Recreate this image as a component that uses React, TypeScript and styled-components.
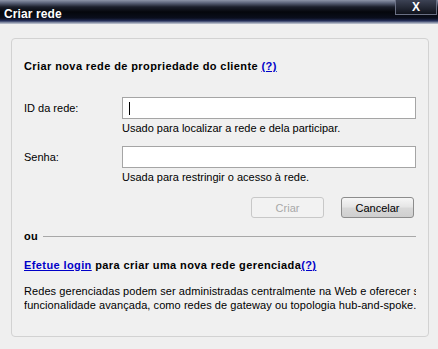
import React from 'react';
import styled, { createGlobalStyle } from 'styled-components';

const GlobalStyle = createGlobalStyle`
  html, body {
    margin: 0;
    padding: 0;
    background: #efefef;
  }
  body {
    font-family: "Liberation Sans", Arial, sans-serif;
    font-size: 11px;
    color: #000;
  }
`;

const Window = styled.div`
  width: 438px;
  height: 349px;
  display: flex;
  flex-direction: column;
  background: #efefef;
  overflow: hidden;
`;

const TitleBar = styled.div`
  height: 24px;
  flex: none;
  display: flex;
  align-items: flex-start;
  justify-content: space-between;
  background: linear-gradient(
    #8d95a8 0px,
    #5a6278 3px,
    #1a1e2a 7px,
    #05070c 12px,
    #0a0e1c 18px,
    #1c2446 20px,
    #2a3462 21px,
    #6c7590 22px,
    #9aa2b6 23px,
    #c8ccd6 24px
  );
`;

const Title = styled.span`
  color: #fff;
  font-weight: bold;
  font-size: 12px;
  padding: 7px 0 0 4px;
  letter-spacing: 0.1px;
`;

const CloseButton = styled.div`
  width: 42px;
  height: 15px;
  margin-right: 1px;
  display: flex;
  align-items: center;
  justify-content: center;
  color: #fff;
  font-weight: bold;
  font-size: 12px;
  background: linear-gradient(#3c4254, #10131c);
  border: 1px solid #6a7084;
  border-top: none;
  box-sizing: border-box;
`;

const Body = styled.div`
  flex: 1;
  padding: 14px 9px 12px 11px;
  display: flex;
`;

const Panel = styled.div`
  flex: 1;
  border: 1px solid #d2d2d2;
  border-radius: 4px;
  background: #f0f0f0;
  padding: 20px 12px 0 12px;
  display: flex;
  flex-direction: column;
  min-width: 0;
`;

const Heading = styled.div`
  font-weight: bold;
  line-height: 14px;
  white-space: nowrap;
  letter-spacing: 0.4px;
`;

const HelpLink = styled.a`
  color: #0000c8;
  text-decoration: underline;
  font-weight: bold;
`;

const Field = styled.div<{ $top: number }>`
  display: grid;
  grid-template-columns: 98px 1fr;
  grid-template-rows: 22px 16px;
  margin-top: ${p => p.$top}px;
`;

const Label = styled.div`
  display: flex;
  align-items: center;
`;

const Input = styled.div<{ $caret?: boolean }>`
  border: 1px solid #a5a5a5;
  background: #fff;
  box-sizing: border-box;
  position: relative;
  &::after {
    content: '';
    display: ${p => (p.$caret ? 'block' : 'none')};
    position: absolute;
    left: 6px;
    top: 4px;
    width: 1px;
    height: 13px;
    background: #000;
  }
`;

const Hint = styled.div`
  grid-column: 2;
  line-height: 16px;
  padding-top: 1px;
`;

const ButtonRow = styled.div`
  display: flex;
  justify-content: flex-end;
  gap: 17px;
  margin-top: 13px;
  padding-right: 2px;
`;

const Button = styled.div<{ $disabled?: boolean }>`
  width: 73px;
  height: 21px;
  box-sizing: border-box;
  display: flex;
  align-items: center;
  justify-content: center;
  border-radius: 3px;
  border: 1px solid ${p => (p.$disabled ? '#c8c8c8' : '#8c8c8c')};
  color: ${p => (p.$disabled ? '#a8a8a8' : '#000')};
  background: ${p =>
    p.$disabled
      ? '#f2f2f2'
      : 'linear-gradient(#f6f6f6 0%, #e6e6e6 45%, #d8d8d8 55%, #cfcfcf 100%)'};
`;

const Divider = styled.div`
  display: flex;
  align-items: center;
  gap: 5px;
  margin-top: 11px;
  font-weight: bold;
  line-height: 14px;
  letter-spacing: 0.4px;
  &::after {
    content: '';
    flex: 1;
    height: 1px;
    background: #a8a8a8;
  }
`;

const LoginLine = styled.div`
  margin-top: 15px;
  font-weight: bold;
  line-height: 14px;
  white-space: nowrap;
  letter-spacing: 0.4px;
`;

const Paragraph = styled.div`
  margin-top: 12px;
  line-height: 14px;
  white-space: nowrap;
  overflow: hidden;
  letter-spacing: 0.07px;
`;

export default function App() {
  return (
    <>
      <GlobalStyle />
      <Window>
        <TitleBar>
          <Title>Criar rede</Title>
          <CloseButton>X</CloseButton>
        </TitleBar>
        <Body>
          <Panel>
            <Heading>
              Criar nova rede de propriedade do cliente <HelpLink>(?)</HelpLink>
            </Heading>
            <Field $top={24}>
              <Label>ID da rede:</Label>
              <Input $caret />
              <Hint>Usado para localizar a rede e dela participar.</Hint>
            </Field>
            <Field $top={11}>
              <Label>Senha:</Label>
              <Input />
              <Hint>Usada para restringir o acesso à rede.</Hint>
            </Field>
            <ButtonRow>
              <Button $disabled>Criar</Button>
              <Button>Cancelar</Button>
            </ButtonRow>
            <Divider>ou</Divider>
            <LoginLine>
              <HelpLink>Efetue login</HelpLink> para criar uma nova rede gerenciada<HelpLink>(?)</HelpLink>
            </LoginLine>
            <Paragraph>
              Redes gerenciadas podem ser administradas centralmente na Web e oferecer suporte a
              <br />
              funcionalidade avançada, como redes de gateway ou topologia hub-and-spoke.
            </Paragraph>
          </Panel>
        </Body>
      </Window>
    </>
  );
}
